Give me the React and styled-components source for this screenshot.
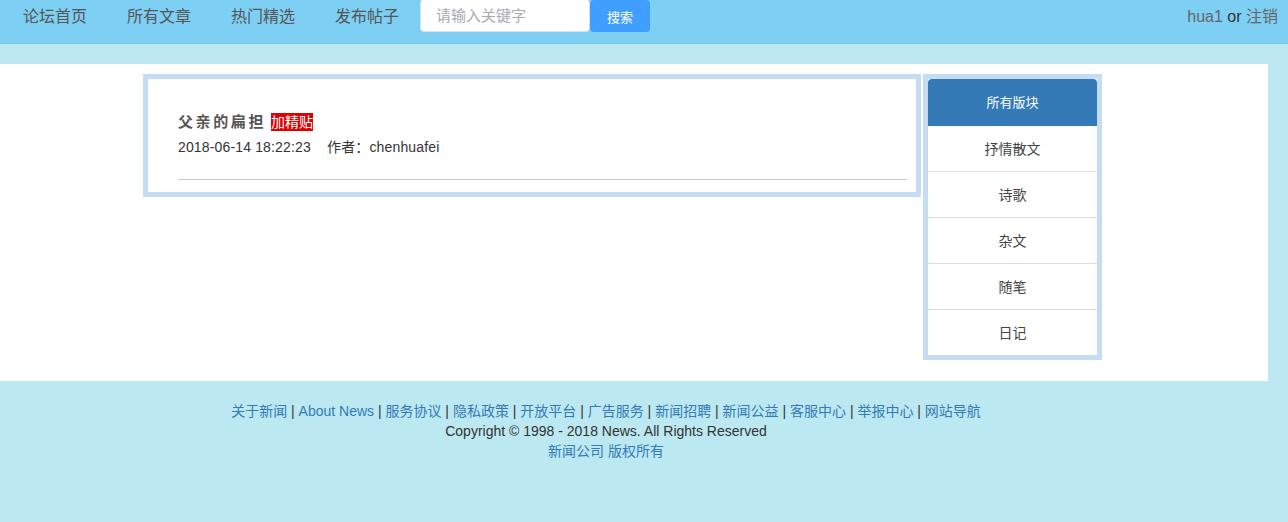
import React from 'react'
import styled, { createGlobalStyle } from 'styled-components'

const navLinks = ['论坛首页', '所有文章', '热门精选', '发布帖子']
const boards = ['抒情散文', '诗歌', '杂文', '随笔', '日记']
const footerLinks = ['关于新闻', 'About News', '服务协议', '隐私政策', '开放平台', '广告服务', '新闻招聘', '新闻公益', '客服中心', '举报中心', '网站导航']

const GlobalStyle = createGlobalStyle`
  html, body {
    margin: 0;
    padding: 0;
    background: #bce8f1;
    font-family: "Liberation Sans", Arial, "Noto Sans CJK SC", sans-serif;
    color: #333;
  }
`

export default function App() {
  return (
    <>
      <GlobalStyle />
      <NavBar>
        <NavLeft>
          {navLinks.map((l) => <NavItem key={l}>{l}</NavItem>)}
          <SearchInput placeholder='请输入关键字' />
          <SearchButton>搜索</SearchButton>
        </NavLeft>
        <UserBox>
          <UserLink>hua1</UserLink> or <UserLink>注销</UserLink>
        </UserBox>
      </NavBar>
      <Main>
        <Content>
          <PostCard>
            <PostTitle>
              父亲的扁担<Badge>加精贴</Badge>
            </PostTitle>
            <PostMeta>2018-06-14 18:22:23&nbsp;&nbsp;&nbsp;&nbsp;作者：chenhuafei</PostMeta>
            <Rule />
          </PostCard>
          <Sidebar>
            <SideHeader>所有版块</SideHeader>
            {boards.map((b, i) => <SideItem key={b} last={i === boards.length - 1}>{b}</SideItem>)}
          </Sidebar>
        </Content>
      </Main>
      <Footer>
        <FooterLine>
          {footerLinks.map((l, i) => (
            <React.Fragment key={l}>
              {i > 0 && ' | '}
              <FooterLink>{l}</FooterLink>
            </React.Fragment>
          ))}
        </FooterLine>
        <FooterLine>Copyright © 1998 - 2018 News. All Rights Reserved</FooterLine>
        <FooterLine><FooterLink>新闻公司 版权所有</FooterLink></FooterLine>
      </Footer>
    </>
  )
}

const NavBar = styled.header`
  height: 43px;
  background: #7ecff4;
  border-bottom: 1px solid #74c3e8;
  display: flex;
  justify-content: space-between;
  align-items: flex-start;
  padding: 0 10px 0 23px;
`

const NavLeft = styled.nav`
  display: flex;
  align-items: flex-start;
`

const NavItem = styled.a`
  font-size: 16px;
  line-height: 34px;
  color: #555;
  margin-right: 40px;
  &:nth-child(4) {
    margin-right: 21px;
  }
`

const SearchInput = styled.input`
  box-sizing: border-box;
  width: 170px;
  height: 33px;
  margin-top: -1px;
  border: 1px solid #dcdfe6;
  border-radius: 4px;
  background: #fff;
  padding: 0 15px;
  font-size: 15px;
  font-family: inherit;
  outline: none;
  &::placeholder {
    color: #a8abb2;
  }
`

const SearchButton = styled.button`
  width: 60px;
  height: 32px;
  border: none;
  border-radius: 4px;
  background: #409eff;
  color: #fff;
  font-size: 13px;
  font-family: inherit;
`

const UserBox = styled.div`
  font-size: 16px;
  line-height: 34px;
  color: #333;
`

const UserLink = styled.a`
  color: #666;
`

const Main = styled.main`
  margin-top: 20px;
  width: 1268px;
  height: 317px;
  background: #fff;
  padding-top: 10px;
  box-sizing: border-box;
`

const Content = styled.div`
  display: flex;
  align-items: flex-start;
  padding-left: 143px;
  gap: 2px;
`

const PostCard = styled.article`
  box-sizing: border-box;
  width: 778px;
  border: 5px solid #c6dcf5;
  background: #fff;
  padding: 33px 9px 12px 30px;
`

const PostTitle = styled.h3`
  margin: 0;
  font-size: 15px;
  line-height: 20px;
  font-weight: bold;
  color: #555;
  font-family: "Liberation Serif", "Noto Sans CJK SC", serif;
  letter-spacing: 2.6px;
`

const Badge = styled.span`
  margin-left: 5px;
  background: #e00000;
  color: #fff;
  font-size: 14px;
  font-weight: normal;
  letter-spacing: 0;
  font-family: "Liberation Sans", "Noto Sans CJK SC", sans-serif;
  padding: 1px 0;
`

const PostMeta = styled.p`
  margin: 5px 0 0;
  font-size: 14px;
  line-height: 20px;
  color: #333;
  letter-spacing: 0.15px;
`

const Rule = styled.hr`
  margin: 22px 0 0;
  border: none;
  border-top: 1px solid #ccc;
`

const Sidebar = styled.aside`
  width: 169px;
  border: 5px solid #c6dcf5;
  background: #fff;
`

const SideHeader = styled.div`
  height: 47px;
  line-height: 47px;
  background: #337ab7;
  color: #fff;
  font-size: 13px;
  text-align: center;
  border-radius: 4px 4px 0 0;
`

const SideItem = styled.div`
  height: 45px;
  line-height: 46px;
  font-size: 14px;
  color: #444;
  text-align: center;
  border-bottom: ${(p) => (p.last ? 'none' : '1px solid #ddd')};
`

const Footer = styled.footer`
  width: 1212px;
  padding-top: 20px;
  text-align: center;
  font-size: 14px;
  color: #333;
`

const FooterLine = styled.div`
  line-height: 20px;
`

const FooterLink = styled.a`
  color: #337ab7;
`
